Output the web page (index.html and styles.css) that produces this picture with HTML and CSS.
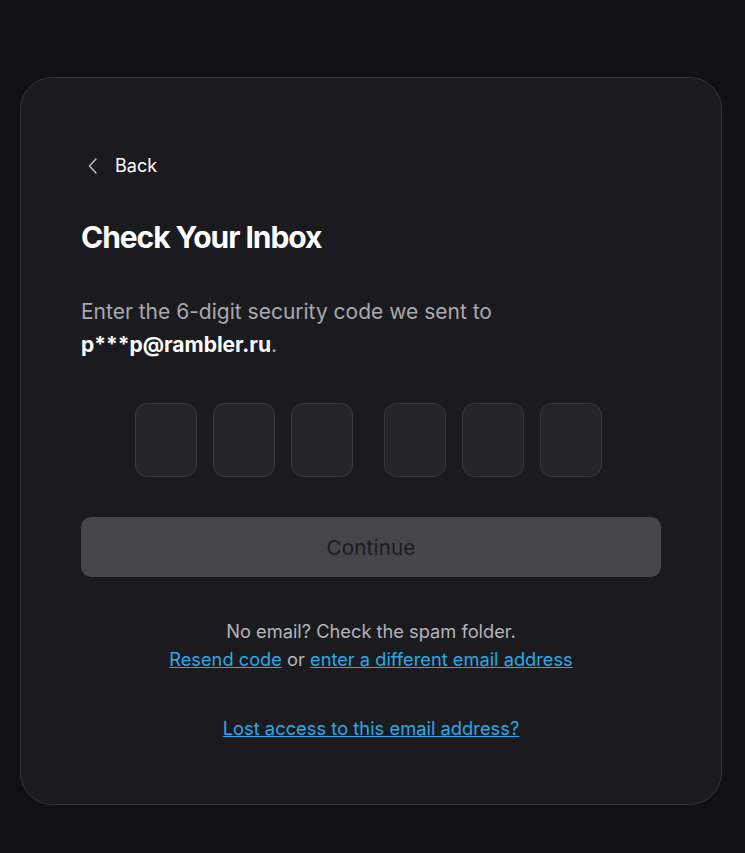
FILE: index.html
```html
<!DOCTYPE html>
<html lang="en">
<head>
<meta charset="utf-8">
<title>Check Your Inbox</title>
<link rel="stylesheet" href="styles.css">
</head>
<body>
<main class="card">
  <a class="back" href="#">
    <svg class="chev" width="12" height="18" viewBox="0 0 12 18" fill="none"><path d="M9 2 L2.5 9 L9 16" stroke="#b9b9be" stroke-width="1.6" stroke-linecap="round" stroke-linejoin="round"/></svg>
    <span>Back</span>
  </a>
  <h1 class="title">Check Your Inbox</h1>
  <p class="desc">Enter the 6-digit security code we sent to <strong>p***p@rambler.ru</strong>.</p>
  <div class="otp">
    <div class="group">
      <input class="digit" maxlength="1">
      <input class="digit" maxlength="1">
      <input class="digit" maxlength="1">
    </div>
    <div class="group">
      <input class="digit" maxlength="1">
      <input class="digit" maxlength="1">
      <input class="digit" maxlength="1">
    </div>
  </div>
  <button class="continue" disabled>Continue</button>
  <div class="help">
    <p class="help-line">No email? Check the spam folder.</p>
    <p class="help-line"><a href="#">Resend code</a> or <a href="#">enter a different email address</a></p>
  </div>
  <p class="lost"><a href="#">Lost access to this email address?</a></p>
</main>
</body>
</html>
```
FILE: styles.css
```css
* { box-sizing: border-box; }
html, body { margin: 0; padding: 0; }
body {
  background: #111115;
  font-family: Inter, "Noto Sans", sans-serif;
  color: #fff;
  padding: 77px 0 0 20px;
  min-height: 853px;
}
.card {
  width: 702px;
  background: #1b1b1f;
  border: 1px solid #333338;
  border-radius: 32px;
  padding: 76px 60px 62px;
  display: flex;
  flex-direction: column;
}
.back {
  display: flex;
  align-items: center;
  gap: 16px;
  color: #fff;
  text-decoration: none;
  font-size: 18px;
  line-height: 24px;
  padding-left: 6px;
}
.chev { display: block; }
.title {
  margin: 41px 0 0;
  font-size: 30px;
  line-height: 36px;
  font-weight: 700;
  letter-spacing: -0.035em;
}
.desc {
  margin: 40px 0 0;
  font-size: 21px;
  line-height: 33px;
  color: #a8a8ad;
}
.desc strong { color: #fff; font-weight: 700; }
.otp {
  margin-top: 42px;
  display: flex;
  justify-content: center;
  gap: 31px;
  padding-right: 5px;
}
.group { display: flex; gap: 16px; }
.digit {
  width: 62px;
  height: 74px;
  background: #242429;
  border: 1px solid #38383e;
  border-radius: 12px;
  outline: none;
  color: #fff;
  font: inherit;
  font-size: 28px;
  text-align: center;
}
.continue {
  margin-top: 40px;
  height: 60px;
  border: none;
  border-radius: 10px;
  background: #46454b;
  color: #1c1c20;
  font-family: inherit;
  font-size: 20.5px;
  letter-spacing: 0.01em;
}
.help {
  margin-top: 40px;
  text-align: center;
}
.help-line {
  margin: 0;
  font-size: 18.25px;
  line-height: 28px;
  color: #b4b4b8;
}
a { color: #2aa9e8; }
.lost {
  margin: 41px 0 0;
  text-align: center;
  font-size: 18.35px;
  line-height: 28px;
}
```
